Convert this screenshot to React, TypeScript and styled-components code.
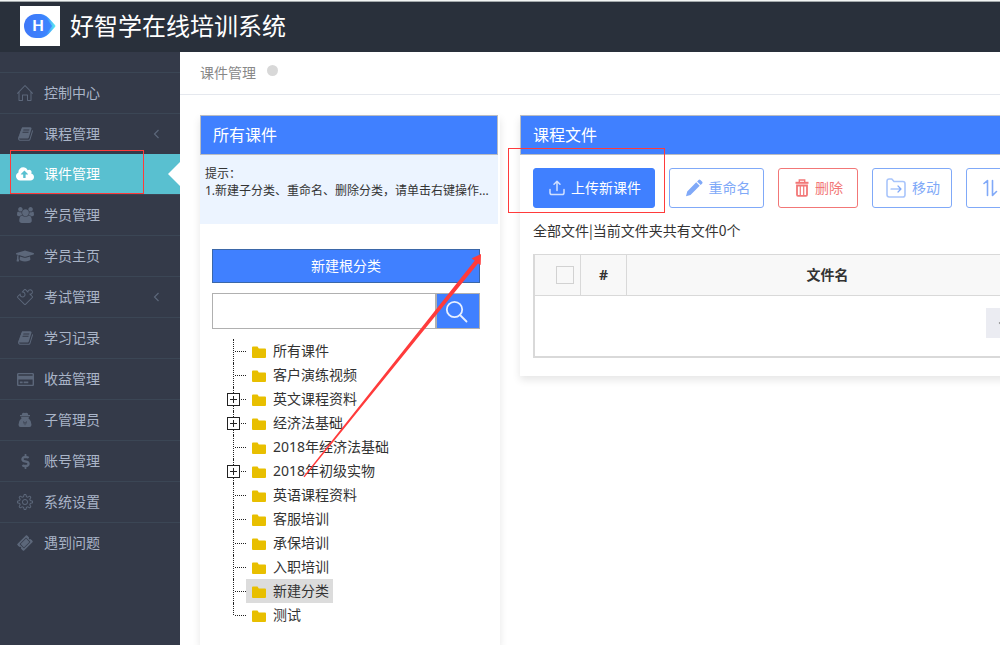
import React from 'react';
import styled, { createGlobalStyle, css } from 'styled-components';
import { FaGraduationCap, FaRegCreditCard, FaDollarSign, FaTicketAlt } from 'react-icons/fa';
import { SlHome, SlPuzzle, SlSettings } from 'react-icons/sl';

const blue = '#4080ff';
const paleBlue = '#80a9f8';
const markRed = '#ff3b3b';

const GlobalStyle = createGlobalStyle`
  *, *::before, *::after { box-sizing: border-box; }
  body {
    margin: 0;
    background: #fff;
    color: #333;
    font: 14px/20px "Noto Sans", "Noto Sans CJK SC", sans-serif;
    overflow: hidden;
  }
  button, input { font: inherit; margin: 0; padding: 0; }
  h1, h2, p, ul { margin: 0; padding: 0; font-weight: 400; }
  ul { list-style: none; }
`;

const Page = styled.div`
  display: flex;
  flex-direction: column;
  min-height: 100vh;
`;

const TopBar = styled.header`
  display: flex;
  align-items: center;
  gap: 10px;
  height: 52px;
  padding: 0 20px 2px;
  border-top: 1px solid #f2f4f4;
  box-shadow: inset 0 1px #a3a9ab;
  background: #29303b;
`;

const Title = styled.h1`
  color: #fff;
  font-size: 24px;
  line-height: 32px;
`;

const Columns = styled.div`
  display: flex;
  flex: 1;
`;

const Sidebar = styled.nav`
  flex: 0 0 180px;
  padding-top: 20px;
  background: #343a49;
`;

const Menu = styled.ul`
  border-top: 1px solid #3b4655;
`;

const MenuItem = styled.li<{ $active?: boolean }>`
  height: 41px;
  margin-top: ${p => (p.$active ? '-1px' : '0')};
  border-bottom: 1px solid #3b4655;
  &:last-child { border-bottom: 0; }
`;

const MenuLink = styled.a<{ $active?: boolean }>`
  position: relative;
  display: flex;
  align-items: center;
  height: 40px;
  padding: 0 20px 0 16px;
  color: #aab5c8;
  text-decoration: none;
  svg { color: #5c677a; }
  ${p => p.$active && css`
    background: #59c0d0;
    color: #fff;
    svg { color: #fff; }
    &::after {
      content: '';
      position: absolute;
      right: 0;
      top: 8px;
      border: 12px solid transparent;
      border-left-width: 0;
      border-right-color: #fff;
    }
  `}
`;

const IconSlot = styled.span`
  display: flex;
  justify-content: center;
  width: 18px;
  margin-right: 10px;
`;

const MenuLabel = styled.span`
  flex: 1;
`;

const Marker = styled.span<{ $area: 'menu' | 'upload' }>`
  position: absolute;
  z-index: 2;
  border: 1px solid ${markRed};
  pointer-events: none;
  ${p => p.$area === 'menu'
    ? css`left: 10px; top: -4px; width: 134px; height: 44px;`
    : css`left: -25px; top: -20px; width: 157px; height: 65px;`}
`;

const Main = styled.main`
  display: flex;
  flex: 1;
  flex-direction: column;
  min-width: 0;
  overflow: hidden;
`;

const Crumbs = styled.div`
  display: flex;
  align-items: center;
  gap: 11px;
  height: 43px;
  padding: 0 20px;
  border-bottom: 1px solid #e5e8ee;
  color: #888;
`;

const Dot = styled.span`
  width: 11px;
  height: 11px;
  margin-bottom: 5px;
  border-radius: 50%;
  background: #d8d8d8;
`;

const Workspace = styled.div`
  display: flex;
  flex: 1;
  gap: 20px;
  padding: 20px 20px 0;
`;

const Panel = styled.section`
  background: #fff;
  box-shadow: 0 4px 8px rgba(0, 0, 0, 0.1);
`;

const CategoryPanel = styled(Panel)`
  position: relative;
  flex: 0 0 300px;
  padding-right: 2px;
`;

const FilePanel = styled(Panel)`
  flex: 1 0 962px;
  align-self: flex-start;
  min-width: 0;
`;

const PanelTitle = styled.h2`
  height: 40px;
  padding: 0 12px;
  border: 1px solid #b9bcc2;
  background: ${blue};
  color: #fff;
  font-size: 16px;
  line-height: 38px;
`;

const Hint = styled.div`
  height: 69px;
  padding: 10px 5px;
  background: #ecf4ff;
  font-size: 12px;
  line-height: 17px;
  white-space: nowrap;
`;

const CategoryBody = styled.div`
  display: flex;
  flex-direction: column;
  gap: 10px;
  padding: 25px 18px 0 12px;
`;

const NewRootButton = styled.button`
  height: 34px;
  border: 1px solid #3b67a8;
  background: ${blue};
  color: #fff;
`;

const SearchForm = styled.form`
  display: flex;
  height: 36px;
`;

const SearchInput = styled.input`
  flex: 1;
  min-width: 0;
  padding: 0 8px;
  border: 1px solid #b0b0b0;
  background: #fff;
`;

const SearchButton = styled.button`
  display: flex;
  align-items: center;
  justify-content: center;
  width: 44px;
  padding-right: 4px;
  border: 1px solid #b0b0b0;
  background: ${blue};
`;

const Tree = styled.ul`
  padding-left: 15px;
`;

const TreeRow = styled.li`
  display: flex;
  height: 24px;
`;

const Guide = styled.span<{ $last: boolean }>`
  position: relative;
  flex: 0 0 19px;
  padding-top: 6px;
  &::before {
    content: '';
    position: absolute;
    left: 6px;
    top: 0;
    height: ${p => (p.$last ? '12px' : '24px')};
    border-left: 1px dotted #222;
  }
  &::after {
    content: '';
    position: absolute;
    left: 8px;
    right: 0;
    top: 12px;
    border-top: 1px dotted #222;
  }
`;

const Expander = styled.button`
  position: relative;
  z-index: 1;
  display: flex;
  width: 13px;
  height: 13px;
  border: 1px solid #222;
  background: #fff;
`;

const TreeNode = styled.a<{ $selected: boolean }>`
  display: flex;
  align-items: center;
  gap: 7px;
  padding: 0 4px 0 6px;
  background: ${p => (p.$selected ? '#dcdcdc' : 'transparent')};
  color: #333;
  text-decoration: none;
  svg { margin-top: 2px; }
`;

const ArrowOverlay = styled.svg`
  position: absolute;
  left: 100px;
  top: 135px;
  z-index: 3;
  pointer-events: none;
`;

const FileBody = styled.div`
  padding: 13px 13px 18px;
`;

const Toolbar = styled.div`
  position: relative;
  display: flex;
  gap: 14px;
`;

const ToolButton = styled.button<{ $tone?: 'primary' | 'danger'; $width: number }>`
  display: flex;
  flex: 0 0 ${p => p.$width}px;
  align-items: center;
  justify-content: center;
  gap: 6px;
  height: 40px;
  padding-left: 2px;
  border: 1px solid ${p => (p.$tone === 'danger' ? '#f27777' : p.$tone === 'primary' ? blue : paleBlue)};
  border-radius: 3px;
  background: ${p => (p.$tone === 'primary' ? blue : '#fff')};
  color: ${p => (p.$tone === 'danger' ? '#f27777' : p.$tone === 'primary' ? '#fff' : paleBlue)};
`;

const SortButton = styled(ToolButton)`
  justify-content: flex-start;
  padding-left: 14px;
`;

const Summary = styled.p`
  padding-bottom: 2px;
  font-family: "Noto Sans CJK SC", sans-serif;
  line-height: 44px;
`;

const TableFrame = styled.div`
  border: 2px solid #d9d9d9;
  border-top-width: 1px;
`;

const FileTable = styled.table`
  width: 100%;
  table-layout: fixed;
  border-collapse: separate;
  border-spacing: 0;
  background: #f8f8f8;
`;

const HeadCell = styled.th<{ $width?: number }>`
  width: ${p => (p.$width ? `${p.$width}px` : 'auto')};
  height: 41px;
  padding: 0;
  border-right: 1px solid #d9d9d9;
  border-bottom: 1px solid #d9d9d9;
  font-weight: 700;
  vertical-align: middle;
`;

const CheckBox = styled.input`
  appearance: none;
  display: block;
  width: 18px;
  height: 18px;
  margin-left: 21px;
  border: 1px solid #d2d2d2;
  background: #f8f8f8;
`;

const Pager = styled.div`
  display: flex;
  justify-content: center;
  padding: 12px 0 18px;
`;

const PageButton = styled.button`
  display: flex;
  align-items: center;
  justify-content: center;
  width: 30px;
  height: 30px;
  border: 0;
  background: #ebecf2;
  color: #888;
`;

const Logo = () => (
  <svg width="40" height="40" viewBox="0 0 40 40" role="img" aria-label="好智学">
    <defs>
      <linearGradient id="logoTip" x1="0" x2="1">
        <stop offset="0.5" stopColor="#3b8cff" />
        <stop offset="1" stopColor="#5ff0f0" />
      </linearGradient>
      <linearGradient id="logoBody" x1="0" x2="1">
        <stop offset="0" stopColor="#3f78f8" />
        <stop offset="1" stopColor="#3c86ff" />
      </linearGradient>
    </defs>
    <rect width="40" height="40" fill="#fff" />
    <path d="M18 8c6 0 9 2 12 5.500l5 5.500q1 1 0 2l-5 5.500c-3 3.500-6 5.500-12 5.500z" fill="url(#logoTip)" />
    <path d="M16 8c6 0 9 2 11.500 5.500L32 20l-4.500 6.500C25 30 22 32 16 32A12 12 0 0 1 16 8z" fill="url(#logoBody)" />
    <text x="18" y="25" textAnchor="middle" fill="#fff" fontFamily="Lato, sans-serif" fontWeight="900" fontSize="15">H</text>
  </svg>
);

const Book = () => (
  <svg width="15" height="16" viewBox="0 0 1664 1792" fill="currentColor">
    <path d="M1639 478q40 57 18 129l-275 906q-19 64-76.500 107.500T1183 1664H260q-77 0-148.500-53.500T12 1479q-24-67-2-127 0-4 3-27t4-37q1-8-3-21.500t-3-19.500q2-11 8-21t16.500-23.500T52 1179q23-38 45-91.500t30-91.500q3-10 .5-30t-.5-28q3-11 17-28t17-23q21-36 42-92t25-90q1-9-2.500-32t.5-28q4-13 22-30.500t22-22.500q19-26 42.500-84.500T340 411q1-8-3-25.500t-2-26.500q2-8 9-18t18-23 17-21q8-12 16.500-30.500t15-35 16-36 19.500-32 26.500-23.500 36-11.500T556 134l-1 3q38-9 51-9h761q74 0 114 56t18 130l-274 906q-36 119-71.500 153.500T1025 1408H156q-27 0-38 15-11 16-1 43 24 70 144 70h923q29 0 56-15.500t35-41.500l300-987q7-22 5-57 38 15 59 43zM575 480q-4 13 2 22.500t20 9.500h608q13 0 25.500-9.500T1247 480l21-64q4-13-2-22.500t-20-9.500H638q-13 0-25.500 9.500T596 416zm-83 256q-4 13 2 22.500t20 9.500h608q13 0 25.500-9.500T1164 736l21-64q4-13-2-22.500t-20-9.500H555q-13 0-25.500 9.500T513 672z" />
  </svg>
);

const CloudUpload = () => (
  <svg width="18" height="17" viewBox="0 0 1920 1792" fill="currentColor">
    <path d="M1280 864q0-14-9-23L919 489q-9-9-23-9t-23 9L522 840q-10 12-10 24 0 14 9 23t23 9h224v352q0 13 9.500 22.500t22.500 9.500h192q13 0 22.500-9.500t9.500-22.500V896h224q13 0 22.500-9.500t9.500-22.500zm640 288q0 159-112.500 271.500T1536 1536H448q-185 0-316.500-131.500T0 1088q0-130 70-240t188-165q-2-30-2-43 0-212 150-362t362-150q156 0 285.500 87T1242 446q71-62 166-62 106 0 181 75t75 181q0 76-41 138 130 31 213.500 135.500T1920 1152z" />
  </svg>
);

const Users = () => (
  <svg width="17" height="16" viewBox="0 0 1920 1792" fill="currentColor">
    <path d="M593 896q-162 5-265 128H194q-82 0-138-40.500T0 865q0-353 124-353 6 0 43.500 21t97.500 42.500T384 597q67 0 133-23-5 37-5 66 0 139 81 256zm1071 637q0 120-73 189.500t-194 69.500H523q-121 0-194-69.500T256 1533q0-53 3.500-103.500t14-109T300 1212t43-97.500 62-81 85.500-53.500T602 960q10 0 43 21.500t73 48 107 48 135 21.500 135-21.500 107-48 73-48 43-21.500q61 0 111.500 20t85.500 53.500 62 81 43 97.500 26.500 108.500 14 109 3.500 103.500zM640 256q0 106-75 181t-181 75-181-75-75-181 75-181T384 0t181 75 75 181zm704 384q0 159-112.500 271.500T960 1024 688.500 911.500 576 640t112.500-271.500T960 256t271.500 112.500T1344 640zm576 225q0 78-56 118.500t-138 40.500h-134q-103-123-265-128 81-117 81-256 0-29-5-66 66 23 133 23 59 0 119-21.500t97.500-42.500 43.500-21q124 0 124 353zm-128-609q0 106-75 181t-181 75-181-75-75-181 75-181 181-75 181 75 75 181z" />
  </svg>
);

const Agent = () => (
  <svg width="14" height="16" viewBox="0 0 14 16" fill="currentColor">
    <path d="M4.300 1.200Q5 .2 7 1q2-.8 2.700.2l.6 1.800h1.700v1.300H2V3h1.700z" />
    <path d="M3 4.800h8l-.6 2.400H3.600z" />
    <path fillRule="evenodd" d="M3 6.800h8q2.500 2 2.500 6Q13.500 15 11.500 15h-9Q.5 15 .5 12.800.5 8.800 3 6.800zM5.200 9l1 4.500.4-3.200zM8.800 9 7.400 10.300l.4 3.200z" />
  </svg>
);

const Ticket = styled(FaTicketAlt)`
  transform: rotate(-45deg);
`;

const Chevron = () => (
  <svg width="7" height="10" viewBox="0 0 7 10" fill="none" stroke="currentColor" strokeWidth="1.200">
    <path d="M5.500 1 1.500 5l4 4" />
  </svg>
);

const Folder = () => (
  <svg width="14" height="12" viewBox="0 0 14 12" fill="#e8bf00">
    <path d="M1 0.500h4.500l1.300 2H13q1 0 1 1V11q0 1-1 1H1q-1 0-1-1V1.500q0-1 1-1z" />
  </svg>
);

const Plus = () => (
  <svg width="11" height="11" viewBox="0 0 11 11" stroke="#222" strokeWidth="1">
    <path d="M2 5.500h7M5.500 2v7" />
  </svg>
);

const Magnifier = () => (
  <svg width="23" height="23" viewBox="0 0 23 23" fill="none" stroke="#e8f0ff" strokeWidth="1.800" strokeLinecap="round">
    <circle cx="9.500" cy="9.500" r="7.700" />
    <path d="m15 15 6.500 6.500" />
  </svg>
);

const UploadIcon = () => (
  <svg width="16" height="16" viewBox="0 0 16 16" fill="none" stroke="#d0dfff" strokeWidth="1.500" strokeLinecap="round" strokeLinejoin="round">
    <path d="M1 9.500v3.200q0 1.800 1.800 1.800h10.400q1.800 0 1.800-1.800V9.500M8 10.500v-9M5 4.300l3-3 3 3" />
  </svg>
);

const PencilIcon = () => (
  <svg width="18" height="18" viewBox="0 0 18 18" fill="#80a9f8">
    <path d="m11.200 3.300 3.500 3.500-9.200 9.200L1 17.200 2.200 12.400zM12.100 2.400l1.500-1.500q.9-.8 1.800 0l1.800 1.800q.8.900 0 1.800l-1.500 1.500z" />
  </svg>
);

const TrashIcon = () => (
  <svg width="14" height="18" viewBox="0 0 14 18" fill="none" stroke="#f27777">
    <path d="M4.300 3V1h5.400v2" strokeWidth="1.400" />
    <path d="M0.500 3.800h13" strokeWidth="2" />
    <path d="M2 6.500v9.300q0 1 1 1h8q1 0 1-1V6.500z" strokeWidth="1.800" />
    <path d="M5.300 7v9M8.700 7v9" strokeWidth="1.200" />
  </svg>
);

const MoveIcon = () => (
  <svg width="20" height="20" viewBox="0 0 20 20" fill="none" strokeLinecap="round" strokeLinejoin="round">
    <path d="M1 3.200Q1 1 3.200 1h2.600L8 3.500h8.800Q19 3.500 19 5.700v11Q19 19 16.800 19H3.200Q1 19 1 16.800z" stroke="#a9c5fb" strokeWidth="1.600" />
    <path d="M5 11h10M12 8l3 3-3 3" stroke="#80a9f8" strokeWidth="1.200" />
  </svg>
);

const SortIcon = () => (
  <svg width="18" height="18" viewBox="0 0 18 18" fill="none" stroke="#80a9f8" strokeWidth="1.600" strokeLinecap="round" strokeLinejoin="round">
    <path d="M3 4.500 6.500 1.500v15M11.500 1.500v15l4-4" />
  </svg>
);

const menu = [
  { label: '控制中心', icon: <SlHome size={16} /> },
  { label: '课程管理', icon: <Book />, nested: true },
  { label: '课件管理', icon: <CloudUpload />, active: true },
  { label: '学员管理', icon: <Users /> },
  { label: '学员主页', icon: <FaGraduationCap size={18} /> },
  { label: '考试管理', icon: <SlPuzzle size={16} />, nested: true },
  { label: '学习记录', icon: <Book /> },
  { label: '收益管理', icon: <FaRegCreditCard size={17} /> },
  { label: '子管理员', icon: <Agent /> },
  { label: '账号管理', icon: <FaDollarSign size={15} /> },
  { label: '系统设置', icon: <SlSettings size={16} /> },
  { label: '遇到问题', icon: <Ticket size={14} /> },
];

const categories = [
  { name: '所有课件' },
  { name: '客户演练视频' },
  { name: '英文课程资料', parent: true },
  { name: '经济法基础', parent: true },
  { name: '2018年经济法基础' },
  { name: '2018年初级实物', parent: true },
  { name: '英语课程资料' },
  { name: '客服培训' },
  { name: '承保培训' },
  { name: '入职培训' },
  { name: '新建分类', selected: true },
  { name: '测试' },
];

export default function App() {
  return (
    <Page>
      <GlobalStyle />
      <TopBar>
        <Logo />
        <Title>好智学在线培训系统</Title>
      </TopBar>
      <Columns>
        <Sidebar>
          <Menu>
            {menu.map(item => (
              <MenuItem key={item.label} $active={item.active}>
                <MenuLink href="#" $active={item.active}>
                  <IconSlot>{item.icon}</IconSlot>
                  <MenuLabel>{item.label}</MenuLabel>
                  {item.nested && <Chevron />}
                  {item.active && <Marker $area="menu" />}
                </MenuLink>
              </MenuItem>
            ))}
          </Menu>
        </Sidebar>
        <Main>
          <Crumbs>
            <span>课件管理</span>
            <Dot />
          </Crumbs>
          <Workspace>
            <CategoryPanel>
              <PanelTitle>所有课件</PanelTitle>
              <Hint>
                <p>提示：</p>
                <p>1.新建子分类、重命名、删除分类，请单击右键操作...</p>
              </Hint>
              <CategoryBody>
                <NewRootButton type="button">新建根分类</NewRootButton>
                <SearchForm>
                  <SearchInput type="text" aria-label="搜索分类" />
                  <SearchButton type="button" aria-label="搜索"><Magnifier /></SearchButton>
                </SearchForm>
                <Tree>
                  {categories.map((c, i) => (
                    <TreeRow key={c.name}>
                      <Guide $last={i === categories.length - 1}>
                        {c.parent && <Expander type="button" aria-label={`展开${c.name}`}><Plus /></Expander>}
                      </Guide>
                      <TreeNode href="#" $selected={!!c.selected}>
                        <Folder />
                        <span>{c.name}</span>
                      </TreeNode>
                    </TreeRow>
                  ))}
                </Tree>
              </CategoryBody>
              <ArrowOverlay width="190" height="230" viewBox="0 0 190 230" fill={markRed} aria-hidden="true">
                <path d="M181 4 171.500 8.500 174.800 10.500 3.500 226.500 4.500 227.300 178 13.500 180.700 15z" />
              </ArrowOverlay>
            </CategoryPanel>
            <FilePanel>
              <PanelTitle>课程文件</PanelTitle>
              <FileBody>
                <Toolbar>
                  <ToolButton type="button" $tone="primary" $width={122}><UploadIcon />上传新课件</ToolButton>
                  <ToolButton type="button" $width={95}><PencilIcon />重命名</ToolButton>
                  <ToolButton type="button" $tone="danger" $width={80}><TrashIcon />删除</ToolButton>
                  <ToolButton type="button" $width={80}><MoveIcon />移动</ToolButton>
                  <SortButton type="button" $width={80} aria-label="排序"><SortIcon /></SortButton>
                  <Marker $area="upload" />
                </Toolbar>
                <Summary>全部文件|当前文件夹共有文件0个</Summary>
                <TableFrame>
                  <FileTable>
                    <thead>
                      <tr>
                        <HeadCell $width={46}><CheckBox type="checkbox" aria-label="全选" /></HeadCell>
                        <HeadCell $width={46}>#</HeadCell>
                        <HeadCell $width={402}>文件名</HeadCell>
                        <HeadCell />
                      </tr>
                    </thead>
                  </FileTable>
                  <Pager>
                    <PageButton type="button" aria-label="上一页"><Chevron /></PageButton>
                  </Pager>
                </TableFrame>
              </FileBody>
            </FilePanel>
          </Workspace>
        </Main>
      </Columns>
    </Page>
  );
}
